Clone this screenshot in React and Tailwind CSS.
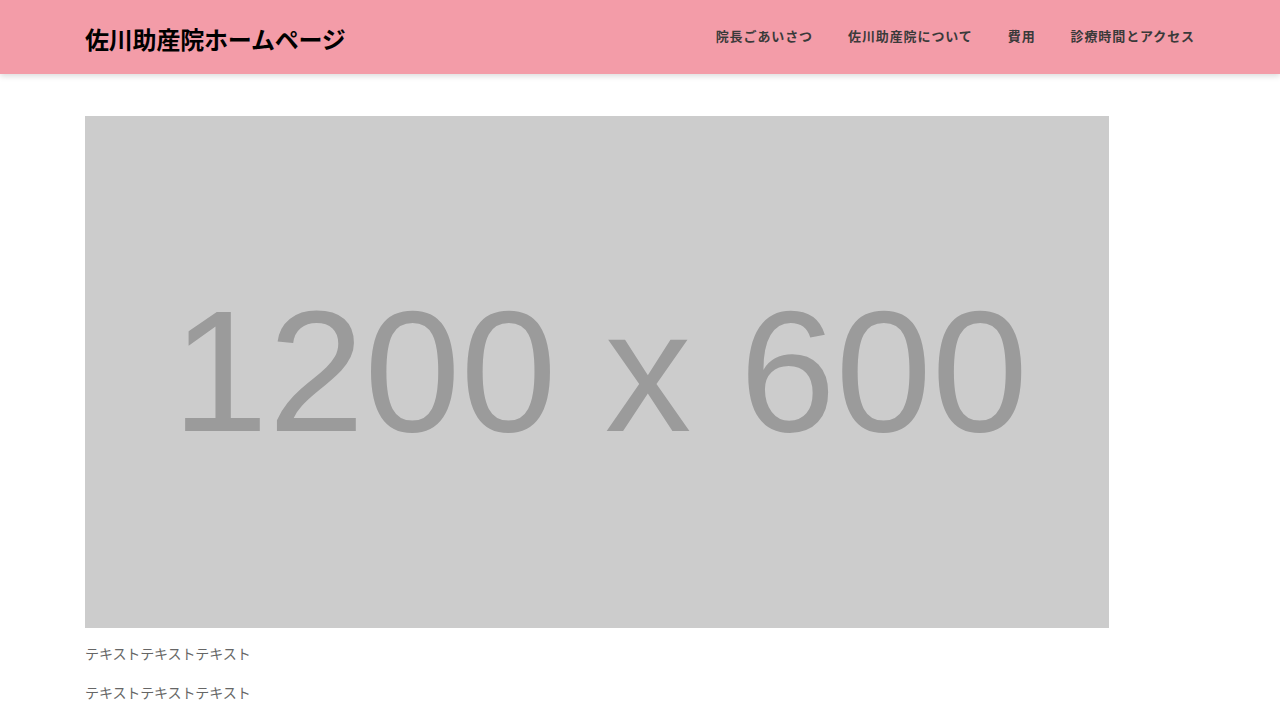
export default function App() {
  const jp = { fontFamily: '"Noto Sans CJK JP", "Noto Sans", sans-serif' };
  return (
    <div className="min-h-screen bg-white" style={jp}>
      <header className="h-[74px] bg-[#f39ca8] shadow-[0_2px_6px_rgba(0,0,0,0.15)] relative z-10">
        <div className="h-full px-[85px] flex items-center justify-between">
          <h1 className="text-[24px] font-bold text-black leading-none pt-[4px] tracking-[-0.2px]">佐川助産院ホームページ</h1>
          <nav className="flex items-center gap-[35px] pb-[4px]">
            {["院長ごあいさつ", "佐川助産院について", "費用", "診療時間とアクセス"].map((t) => (
              <a key={t} className="text-[13px] font-bold text-[#3a3a3a] tracking-[0.9px] leading-none">{t}</a>
            ))}
          </nav>
        </div>
      </header>
      <main className="px-[85px] pt-[42px]">
        <div className="w-[1024px] h-[512px] bg-[#cccccc] flex items-center justify-center">
          <span className="text-[#9b9b9b] text-[173px] leading-none pl-[6px] pb-[2px]" style={{ fontFamily: '"Liberation Sans", Arial, sans-serif' }}>1200 x 600</span>
        </div>
        <p className="mt-[13px] text-[14px] leading-[24px] text-[#666666] tracking-[-0.1px]">テキストテキストテキスト</p>
        <p className="mt-[15px] text-[14px] leading-[24px] text-[#666666] tracking-[-0.1px]">テキストテキストテキスト</p>
      </main>
    </div>
  );
}
